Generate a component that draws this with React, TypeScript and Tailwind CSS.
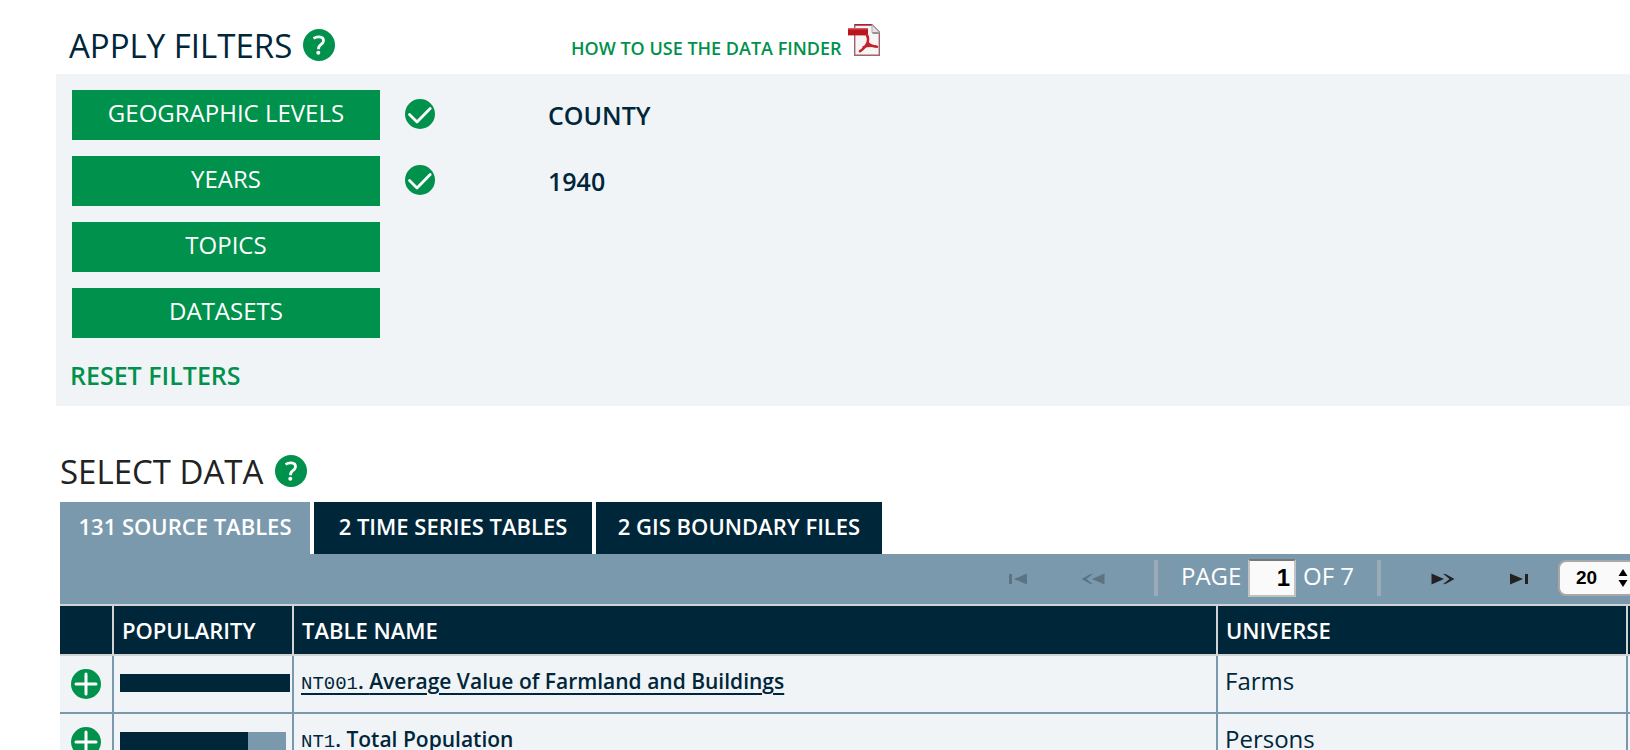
function HelpButton({ label }: { label: string }) {
  return (
    <button type="button" aria-label={label} className="block">
      <svg viewBox="0 0 32 32" className="h-8 w-8" aria-hidden="true">
        <circle cx="16" cy="16" r="16" fill="#00914c" />
        <path d="M10.500 9.400Q13.400 7.700 16.200 7.900Q20.700 8.200 20.500 11.800Q20.300 13.900 17.800 15.600Q15.400 17.300 15.500 20.200" fill="none" stroke="#fff" strokeWidth="2.8" />
        <circle cx="15.300" cy="23.700" r="2" fill="#fff" />
      </svg>
    </button>
  );
}

function CheckIcon() {
  return (
    <svg viewBox="0 0 30 30" className="h-[30px] w-[30px]" role="img" aria-label="Filter applied">
      <circle cx="15" cy="15" r="15" fill="#00914c" />
      <path d="M4.500 15.500L12 23L25.200 9.500" fill="none" stroke="#fff" strokeWidth="2.8" strokeLinecap="round" strokeLinejoin="round" />
    </svg>
  );
}

function PlusIcon() {
  return (
    <svg viewBox="0 0 30 30" className="h-[30px] w-[30px]" aria-hidden="true">
      <circle cx="15" cy="15" r="15" fill="#00914c" />
      <path d="M15 5V25M5 15H25" stroke="#fff" strokeWidth="3" strokeLinecap="round" />
    </svg>
  );
}

function PdfIcon() {
  return (
    <svg viewBox="0 0 32 32" className="h-8 w-8 shrink-0" aria-hidden="true">
      <path d="M6.700 .8H24L31.300 8V31.300H6.700Z" fill="#f6f4f4" stroke="#a0626c" strokeWidth="1.400" />
      <path d="M6.700 .8H24" stroke="#a32638" strokeWidth="1.600" />
      <path d="M24 .8V8.500H31.300Z" fill="#e4e2e2" stroke="#aaa" strokeWidth="1" />
      <path d="M24.500 9.200H30.500" stroke="#777" strokeWidth="1.200" />
      <rect y="4" width="20" height="7.400" fill="#b9141f" />
      <rect y="4" width="20" height="1.400" fill="#dc5b60" />
      <path d="M18.700 10.500Q20.800 14 19.600 18.500Q17.500 23.500 12 27.300M19.600 18.500Q22 22.300 29 22.800M15.500 23.200Q21 20.800 27.500 22.200" fill="none" stroke="#c5202c" strokeWidth="2.500" strokeLinecap="round" />
    </svg>
  );
}

const filters = [
  { name: 'GEOGRAPHIC LEVELS', value: 'COUNTY' },
  { name: 'YEARS', value: '1940' },
  { name: 'TOPICS', value: '' },
  { name: 'DATASETS', value: '' },
];

const rows = [
  { code: 'NT001', title: 'Average Value of Farmland and Buildings', universe: 'Farms', popularity: 100, track: 'w-[170px]', linked: true },
  { code: 'NT1', title: 'Total Population', universe: 'Persons', popularity: 77, track: 'w-[166px]', linked: false },
];

const cell = 'border-r-2 border-b-2 border-[#7b99ad] p-0';
const head = 'border-r-2 border-b-2 border-[#d3d3d3] p-0 text-left';
const tab = 'h-[52px] pb-1 text-center text-[22px] font-semibold text-white';

export default function App() {
  return (
    <main className="h-screen overflow-hidden bg-white pl-14 font-['Open_Sans',sans-serif] text-[#00263a]">
      <section>
        <header className="flex h-[74px] items-center pt-4">
          <h1 className="w-[234px] pt-0.5 pl-[13px] text-[33px] leading-8 whitespace-nowrap">APPLY FILTERS</h1>
          <div className="w-[281px] pl-[13px]">
            <HelpButton label="Help with filters" />
          </div>
          <a href="#guide" className="flex items-start gap-1.5 pb-1 text-[18px] font-semibold text-[#00914c]">
            <span className="pt-2.5 leading-7">HOW TO USE THE DATA FINDER</span>
            <PdfIcon />
          </a>
        </header>
        <div className="bg-[#f0f4f7] px-4 pt-4 pb-4">
          <ul className="flex flex-col gap-4">
            {filters.map((f) => (
              <li key={f.name} className="flex h-[50px] items-center">
                <button type="button" className="h-full w-[308px] bg-[#00914c] pb-1 text-[24px] text-white">
                  {f.name}
                </button>
                {f.value && (
                  <>
                    <div className="w-[168px] pb-0.5 pl-[25px]">
                      <CheckIcon />
                    </div>
                    <span className="pt-0.5 text-[25px] font-semibold">{f.value}</span>
                  </>
                )}
              </li>
            ))}
          </ul>
          <button type="button" className="mt-5 -ml-0.5 block pt-0.5 text-[25px] leading-[30px] font-semibold text-[#00914c]">
            RESET FILTERS
          </button>
        </div>
      </section>

      <section className="pl-1">
        <header className="flex h-24 items-center pt-[34px]">
          <h2 className="w-[202px] pt-0.5 text-[33px] leading-8 whitespace-nowrap text-[#222]">SELECT DATA</h2>
          <div className="pl-[13px]">
            <HelpButton label="Help with data selection" />
          </div>
        </header>
        <div role="tablist" className="flex gap-1">
          <button role="tab" aria-selected="true" className={`${tab} w-[250px] bg-[#7b99ad]`}>131 SOURCE TABLES</button>
          <button role="tab" aria-selected="false" className={`${tab} w-[278px] bg-[#00263a]`}>2 TIME SERIES TABLES</button>
          <button role="tab" aria-selected="false" className={`${tab} w-[286px] bg-[#00263a]`}>2 GIS BOUNDARY FILES</button>
        </div>
        <nav aria-label="Pagination" className="flex h-[50px] items-center justify-end overflow-hidden bg-[#7b99ad] pb-0.5 text-[24px] text-white">
          <button type="button" aria-label="First page" disabled className="mr-[53px] pt-0.5">
            <svg viewBox="0 0 20 12" className="h-3 w-5" fill="#5c7382" aria-hidden="true">
              <path d="M1 1H4V11H1ZM19 .5V11.500L6 6Z" />
            </svg>
          </button>
          <button type="button" aria-label="Previous page" disabled className="mr-[49px] pt-0.5">
            <svg viewBox="0 0 24 12" className="h-3 w-6" fill="#5c7382" aria-hidden="true">
              <path d="M23.500 .5V11.500L11 6ZM12 .8L5.500 6L12 11.200L9 10.800L.5 6L9 1.200Z" />
            </svg>
          </button>
          <span className="h-9 w-1 bg-[#98abb6]" />
          <label className="flex items-center pl-[23px]">
            <span className="w-[67px] pb-1">PAGE</span>
            <input
              type="text"
              defaultValue="1"
              className="h-[38px] w-12 border-2 border-[#c2c2c2] border-t-[#777] bg-[#fafafa] pr-1 text-right font-['Liberation_Sans',sans-serif] text-[24px] font-bold text-black"
            />
          </label>
          <span className="w-[81px] pb-1 pl-[7px] whitespace-nowrap">OF 7</span>
          <span className="h-9 w-1 bg-[#98abb6]" />
          <button type="button" aria-label="Next page" className="ml-[50px] pt-0.5">
            <svg viewBox="0 0 24 12" className="h-3 w-6" fill="#222" aria-hidden="true">
              <path d="M.5 .5V11.500L13 6ZM12 .8L18.500 6L12 11.200L15 10.800L23.500 6L15 1.200Z" />
            </svg>
          </button>
          <button type="button" aria-label="Last page" className="ml-[54px] pt-0.5">
            <svg viewBox="0 0 20 12" className="h-3 w-5" fill="#222" aria-hidden="true">
              <path d="M19 1H16V11H19ZM1 .5V11.500L14 6Z" />
            </svg>
          </button>
          <div className="-mr-2 ml-[29px] flex h-9 w-20 shrink-0 items-center rounded-lg border-2 border-[#a8a8a8] bg-[#fafafa]">
            <select aria-label="Rows per page" defaultValue="20" className="w-[58px] appearance-none bg-transparent pl-4 font-['Liberation_Sans',sans-serif] text-[19px] font-bold text-black">
              <option>20</option>
              <option>50</option>
              <option>100</option>
            </select>
            <svg viewBox="0 0 10 20" className="h-5 w-[10px] shrink-0" aria-hidden="true">
              <path d="M5 1L9.500 8H.5ZM5 19L.5 12H9.500Z" fill="#000" />
            </svg>
          </div>
        </nav>
        <table className="w-full table-fixed border-separate border-spacing-0 border-t-2 border-[#d3d3d3]">
          <colgroup>
            <col className="w-[54px]" />
            <col className="w-[180px]" />
            <col />
            <col className="w-[410px]" />
            <col className="w-[2px]" />
          </colgroup>
          <thead>
            <tr className="h-[50px] bg-[#00263a] text-[22px] text-white">
              <th className={head} aria-label="Add" />
              <th className={head}><span className="block pl-2 font-semibold">POPULARITY</span></th>
              <th className={head}><span className="block pl-2 font-semibold">TABLE NAME</span></th>
              <th className={head}><span className="block pl-2 font-semibold">UNIVERSE</span></th>
              <th className="border-b-2 border-[#d3d3d3] p-0" aria-label="Dataset" />
            </tr>
          </thead>
          <tbody>
            {rows.map((r) => (
              <tr key={r.code} className="h-[58px] bg-[#f0f4f7]">
                <td className={cell}>
                  <button type="button" aria-label={`Add ${r.title}`} className="ml-[11px] block">
                    <PlusIcon />
                  </button>
                </td>
                <td className={`${cell} pb-0.5`}>
                  <div className={`ml-[6px] h-[18px] bg-[#7b99ad] ${r.track}`}>
                    <div className="h-full bg-[#00263a]" style={{ width: `${r.popularity}%` }} />
                  </div>
                </td>
                <td className={cell}>
                  <a href={`#${r.code}`} className={`block pb-1 pl-[7px] ${r.linked ? 'underline decoration-2 underline-offset-4' : ''}`}>
                    <span className="font-['Liberation_Mono',monospace] text-[19px]">{r.code}</span>
                    <span className="text-[21px] font-semibold">. {r.title}</span>
                  </a>
                </td>
                <td className={cell}>
                  <span className="block pb-1.5 pl-[7px] text-[24px]">{r.universe}</span>
                </td>
                <td className="border-b-2 border-[#7b99ad] p-0" />
              </tr>
            ))}
          </tbody>
        </table>
      </section>
    </main>
  );
}
